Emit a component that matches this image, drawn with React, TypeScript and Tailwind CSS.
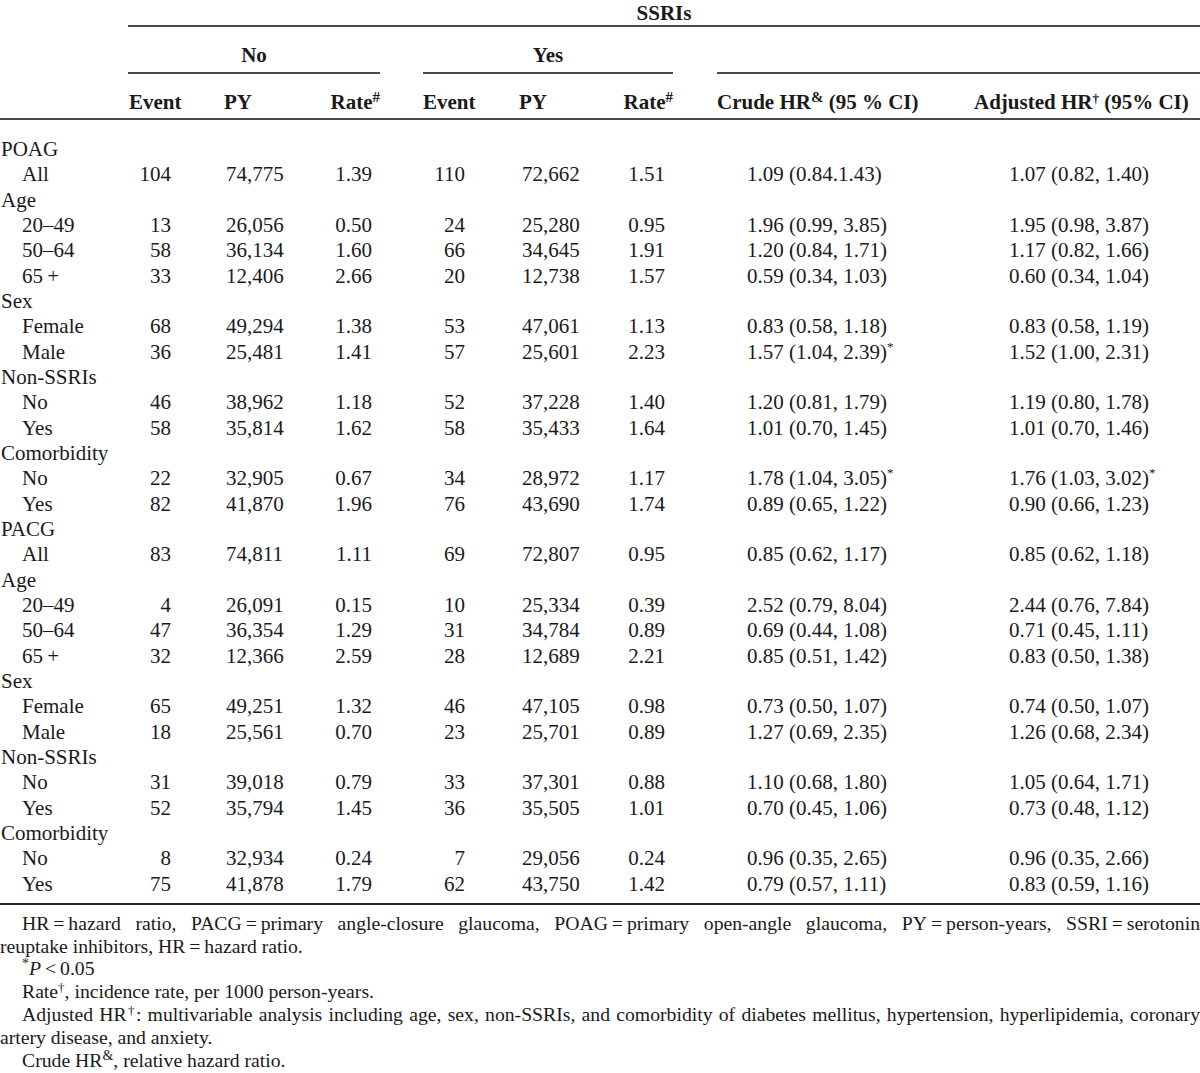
import React from "react";

type Row = {
  label: string;
  sub?: boolean;
  e1?: string;
  py1?: string;
  r1?: string;
  e2?: string;
  py2?: string;
  r2?: string;
  crude?: string;
  cs?: boolean;
  adj?: string;
  as?: boolean;
};

const rows: Row[] = [
  { label: "POAG" },
  { label: "All", sub: true, e1: "104", py1: "74,775", r1: "1.39", e2: "110", py2: "72,662", r2: "1.51", crude: "1.09 (0.84.1.43)", adj: "1.07 (0.82, 1.40)" },
  { label: "Age" },
  { label: "20\u201349", sub: true, e1: "13", py1: "26,056", r1: "0.50", e2: "24", py2: "25,280", r2: "0.95", crude: "1.96 (0.99, 3.85)", adj: "1.95 (0.98, 3.87)" },
  { label: "50\u201364", sub: true, e1: "58", py1: "36,134", r1: "1.60", e2: "66", py2: "34,645", r2: "1.91", crude: "1.20 (0.84, 1.71)", adj: "1.17 (0.82, 1.66)" },
  { label: "65\u2009+", sub: true, e1: "33", py1: "12,406", r1: "2.66", e2: "20", py2: "12,738", r2: "1.57", crude: "0.59 (0.34, 1.03)", adj: "0.60 (0.34, 1.04)" },
  { label: "Sex" },
  { label: "Female", sub: true, e1: "68", py1: "49,294", r1: "1.38", e2: "53", py2: "47,061", r2: "1.13", crude: "0.83 (0.58, 1.18)", adj: "0.83 (0.58, 1.19)" },
  { label: "Male", sub: true, e1: "36", py1: "25,481", r1: "1.41", e2: "57", py2: "25,601", r2: "2.23", crude: "1.57 (1.04, 2.39)", cs: true, adj: "1.52 (1.00, 2.31)" },
  { label: "Non-SSRIs" },
  { label: "No", sub: true, e1: "46", py1: "38,962", r1: "1.18", e2: "52", py2: "37,228", r2: "1.40", crude: "1.20 (0.81, 1.79)", adj: "1.19 (0.80, 1.78)" },
  { label: "Yes", sub: true, e1: "58", py1: "35,814", r1: "1.62", e2: "58", py2: "35,433", r2: "1.64", crude: "1.01 (0.70, 1.45)", adj: "1.01 (0.70, 1.46)" },
  { label: "Comorbidity" },
  { label: "No", sub: true, e1: "22", py1: "32,905", r1: "0.67", e2: "34", py2: "28,972", r2: "1.17", crude: "1.78 (1.04, 3.05)", cs: true, adj: "1.76 (1.03, 3.02)", as: true },
  { label: "Yes", sub: true, e1: "82", py1: "41,870", r1: "1.96", e2: "76", py2: "43,690", r2: "1.74", crude: "0.89 (0.65, 1.22)", adj: "0.90 (0.66, 1.23)" },
  { label: "PACG" },
  { label: "All", sub: true, e1: "83", py1: "74,811", r1: "1.11", e2: "69", py2: "72,807", r2: "0.95", crude: "0.85 (0.62, 1.17)", adj: "0.85 (0.62, 1.18)" },
  { label: "Age" },
  { label: "20\u201349", sub: true, e1: "4", py1: "26,091", r1: "0.15", e2: "10", py2: "25,334", r2: "0.39", crude: "2.52 (0.79, 8.04)", adj: "2.44 (0.76, 7.84)" },
  { label: "50\u201364", sub: true, e1: "47", py1: "36,354", r1: "1.29", e2: "31", py2: "34,784", r2: "0.89", crude: "0.69 (0.44, 1.08)", adj: "0.71 (0.45, 1.11)" },
  { label: "65\u2009+", sub: true, e1: "32", py1: "12,366", r1: "2.59", e2: "28", py2: "12,689", r2: "2.21", crude: "0.85 (0.51, 1.42)", adj: "0.83 (0.50, 1.38)" },
  { label: "Sex" },
  { label: "Female", sub: true, e1: "65", py1: "49,251", r1: "1.32", e2: "46", py2: "47,105", r2: "0.98", crude: "0.73 (0.50, 1.07)", adj: "0.74 (0.50, 1.07)" },
  { label: "Male", sub: true, e1: "18", py1: "25,561", r1: "0.70", e2: "23", py2: "25,701", r2: "0.89", crude: "1.27 (0.69, 2.35)", adj: "1.26 (0.68, 2.34)" },
  { label: "Non-SSRIs" },
  { label: "No", sub: true, e1: "31", py1: "39,018", r1: "0.79", e2: "33", py2: "37,301", r2: "0.88", crude: "1.10 (0.68, 1.80)", adj: "1.05 (0.64, 1.71)" },
  { label: "Yes", sub: true, e1: "52", py1: "35,794", r1: "1.45", e2: "36", py2: "35,505", r2: "1.01", crude: "0.70 (0.45, 1.06)", adj: "0.73 (0.48, 1.12)" },
  { label: "Comorbidity" },
  { label: "No", sub: true, e1: "8", py1: "32,934", r1: "0.24", e2: "7", py2: "29,056", r2: "0.24", crude: "0.96 (0.35, 2.65)", adj: "0.96 (0.35, 2.66)" },
  { label: "Yes", sub: true, e1: "75", py1: "41,878", r1: "1.79", e2: "62", py2: "43,750", r2: "1.42", crude: "0.79 (0.57, 1.11)", adj: "0.83 (0.59, 1.16)" },
];

function Star() {
  return <sup className="text-[13px] top-[-0.6em]">*</sup>;
}

function DataRow({ r }: { r: Row }) {
  return (
    <div className="flex h-[25.34px] leading-[25.34px] whitespace-nowrap">
      <div className={r.sub ? "w-[128px] pl-[22px]" : "w-[128px] pl-[1px]"}>{r.label}</div>
      <div className="w-[96px] text-right pr-[53px]">{r.e1}</div>
      <div className="w-[76px] pl-[2px]">{r.py1}</div>
      <div className="w-[80px] text-right pr-[8px]">{r.r1}</div>
      <div className="w-[43px]" />
      <div className="w-[96px] text-right pr-[54px]">{r.e2}</div>
      <div className="w-[74px] pl-[3px]">{r.py2}</div>
      <div className="w-[80px] text-right pr-[8px]">{r.r2}</div>
      <div className="w-[44px]" />
      <div className="w-[257px] pl-[30px]">
        {r.crude}
        {r.cs && <Star />}
      </div>
      <div className="w-[226px] pl-[35px]">
        {r.adj}
        {r.as && <Star />}
      </div>
    </div>
  );
}

export default function App() {
  return (
    <div className="w-[1200px] h-[1073px] bg-white text-[#1a1a1a] font-['Liberation_Serif','Times_New_Roman',serif] text-[21px] overflow-hidden">
      {/* Header */}
      <div className="flex h-[25px] leading-[26px] font-bold">
        <div className="w-[128px]" />
        <div className="flex-1 text-center">SSRIs</div>
      </div>
      <div className="ml-[128px] h-[2px] bg-[#4a4a4a]" />
      <div className="flex pt-[15px] leading-[26px] font-bold">
        <div className="w-[128px]" />
        <div className="w-[252px] text-center">No</div>
        <div className="w-[43px]" />
        <div className="w-[250px] text-center">Yes</div>
        <div className="w-[44px]" />
        <div className="w-[483px]" />
      </div>
      <div className="flex mt-[4px]">
        <div className="w-[128px]" />
        <div className="w-[252px] h-[2px] bg-[#4a4a4a]" />
        <div className="w-[43px]" />
        <div className="w-[250px] h-[2px] bg-[#4a4a4a]" />
        <div className="w-[44px]" />
        <div className="w-[483px] h-[2px] bg-[#4a4a4a]" />
      </div>
      <div className="flex pt-[15px] leading-[26px] font-bold whitespace-nowrap">
        <div className="w-[128px]" />
        <div className="w-[96px] pl-[1px]">Event</div>
        <div className="w-[76px]">PY</div>
        <div className="w-[80px] text-right">
          Rate<sup className="text-[15px]">#</sup>
        </div>
        <div className="w-[43px]" />
        <div className="w-[96px]">Event</div>
        <div className="w-[74px]">PY</div>
        <div className="w-[80px] text-right">
          Rate<sup className="text-[15px]">#</sup>
        </div>
        <div className="w-[44px]" />
        <div className="w-[257px]">
          Crude HR<sup className="text-[15px]">&amp;</sup> (95 % CI)
        </div>
        <div className="w-[226px]">
          Adjusted HR<sup className="text-[13px]">{"\u2020"}</sup> (95% CI)
        </div>
      </div>
      <div className="mt-[3px] h-[2px] bg-[#4a4a4a]" />

      {/* Body */}
      <div className="mt-[17px]">
        {rows.map((r, i) => (
          <DataRow key={i} r={r} />
        ))}
      </div>
      <div className="mt-[6px] h-[2px] bg-[#222]" />

      {/* Footnotes */}
      <div className="mt-[7px] text-[19.7px] leading-[22.8px]">
        <div className="pl-[22px] text-justify [text-align-last:justify] whitespace-nowrap">
          HR{"\u2009=\u2009"}hazard ratio, PACG{"\u2009=\u2009"}primary angle-closure glaucoma, POAG{"\u2009=\u2009"}primary open-angle glaucoma, PY{"\u2009=\u2009"}person-years, SSRI{"\u2009=\u2009"}serotonin
        </div>
        <div>reuptake inhibitors, HR{"\u2009=\u2009"}hazard ratio.</div>
        <div className="pl-[22px]">
          <sup className="text-[14px]">*</sup>
          <span className="italic">P</span>
          {"\u2009<\u2009"}0.05
        </div>
        <div className="pl-[22px]">
          Rate<sup className="text-[13px]">{"\u2020"}</sup>, incidence rate, per 1000 person-years.
        </div>
        <div className="pl-[22px] text-justify [text-align-last:justify] whitespace-nowrap">
          Adjusted HR<sup className="text-[13px]">{"\u2020"}</sup>: multivariable analysis including age, sex, non-SSRIs, and comorbidity of diabetes mellitus, hypertension, hyperlipidemia, coronary
        </div>
        <div>artery disease, and anxiety.</div>
        <div className="pl-[22px]">
          Crude HR<sup className="text-[14px]">&amp;</sup>, relative hazard ratio.
        </div>
      </div>
    </div>
  );
}
